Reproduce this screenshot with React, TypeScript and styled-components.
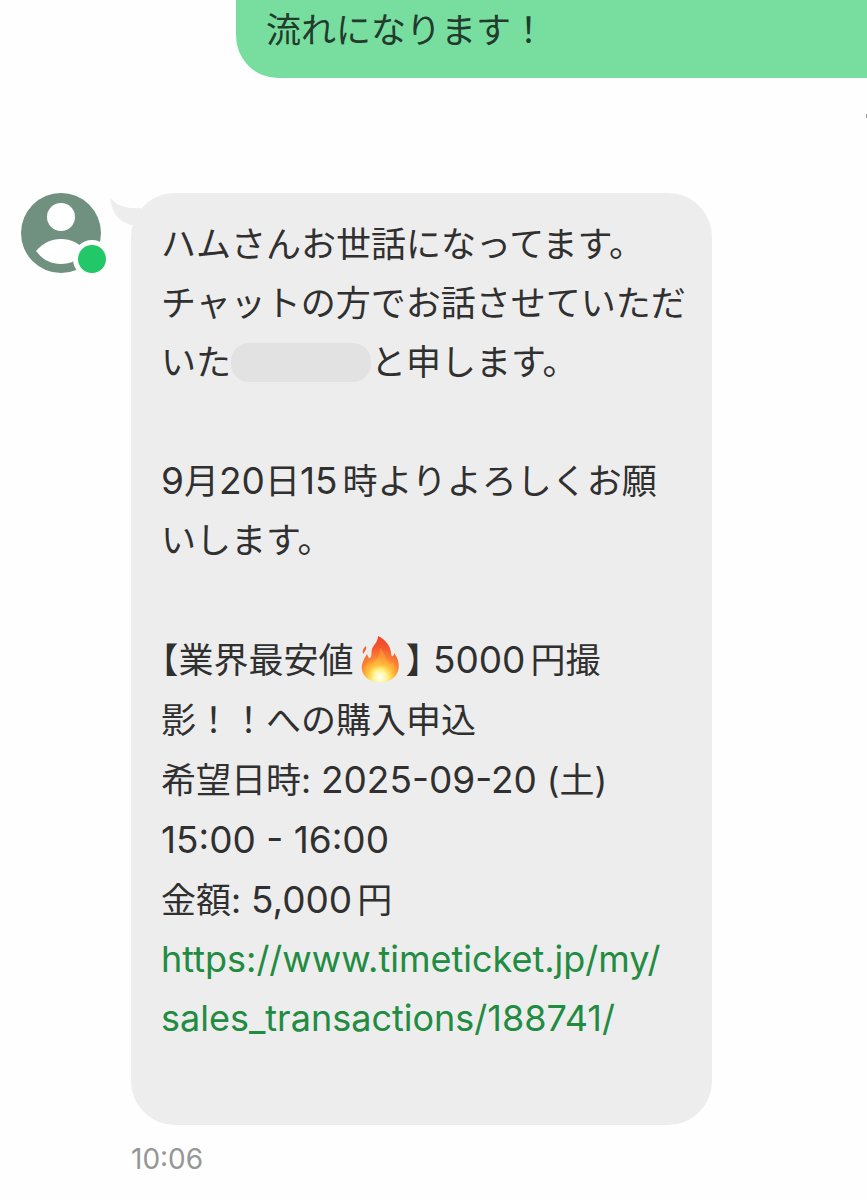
import React from "react";
import styled, { createGlobalStyle } from "styled-components";

const GlobalStyle = createGlobalStyle`
  *, *::before, *::after { box-sizing: border-box; }
  html { overflow-x: hidden; }
  body {
    margin: 0;
    background: #fefefe;
    color: #303030;
    font-family: Inter, "Noto Sans CJK JP", sans-serif;
    font-size: 35px;
    line-height: 59px;
  }
`;

const Chat = styled.main`
  display: flex;
  flex-direction: column;
`;

const SentMessage = styled.section`
  margin-left: 236px;
  padding: 1px 30px 18px;
  border-bottom-left-radius: 42px;
  background: #78dea0;
  color: #233b2c;
`;

const SentMeta = styled.div`
  display: flex;
  justify-content: flex-end;
  align-items: center;
  height: 76px;
`;

const MetaMark = styled.span`
  width: 1px;
  height: 4px;
  background: #999;
`;

const ReceivedMessage = styled.section`
  display: flex;
  align-items: flex-start;
  gap: 30px;
  margin-top: 39px;
  padding: 0 155px 0 21px;
`;

const Avatar = styled.div`
  position: relative;
  flex: none;
  width: 80px;
  height: 80px;

  svg { display: block; }
`;

const OnlineBadge = styled.span`
  position: absolute;
  right: -10px;
  bottom: -5px;
  width: 38px;
  height: 38px;
  border: 5px solid #fefefe;
  border-radius: 50%;
  background: #22c767;
`;

const Column = styled.div`
  flex: 1;
  min-width: 0;
`;

const Bubble = styled.div`
  position: relative;
  padding: 22px 0 77px 30px;
  border-radius: 44px;
  background: #ededed;
  white-space: nowrap;
`;

const Tail = styled.svg`
  position: absolute;
  top: 4px;
  left: -21px;
`;

const Paragraph = styled.p<{ $loose?: boolean }>`
  margin: 0;
  line-height: ${(p) => (p.$loose ? 60 : 59)}px;

  & + & { margin-top: 60px; }
`;

const Num = styled.span<{ $spaced?: boolean }>`
  margin-right: ${(p) => (p.$spaced ? 5 : 0)}px;
  font-size: 37px;
  line-height: 1;
`;

const Redacted = styled.span`
  display: inline-block;
  width: 140px;
  height: 39px;
  border-radius: 18px;
  background: #e2e2e2;
  vertical-align: -7px;
`;

const Bracket = styled.span`
  font-feature-settings: "halt";
`;

const Fire = styled.svg`
  margin: 0 6px;
  vertical-align: -10px;
`;

const MessageLink = styled.a`
  display: block;
  color: #218c41;
  font-size: 36px;
  text-decoration: none;
`;

const Time = styled.time`
  display: block;
  padding-top: 16px;
  color: #969696;
  font-size: 28px;
  line-height: 36px;
`;

const FireIcon = () => (
  <Fire width="40" height="48" viewBox="0 0 40 48" role="img" aria-label="火">
    <defs>
      <radialGradient id="flame" gradientUnits="userSpaceOnUse" cx="20" cy="42" r="40">
        <stop offset="0" stopColor="#fffde0" />
        <stop offset="0.14" stopColor="#fff176" />
        <stop offset="0.32" stopColor="#ffc23c" />
        <stop offset="0.5" stopColor="#fa8234" />
        <stop offset="0.75" stopColor="#f4562d" />
        <stop offset="1" stopColor="#ef4429" />
      </radialGradient>
      <radialGradient id="core" gradientUnits="userSpaceOnUse" cx="20" cy="42" r="14">
        <stop offset="0" stopColor="#ffffff" />
        <stop offset="0.45" stopColor="#fff79a" />
        <stop offset="1" stopColor="#ffd640" stopOpacity="0" />
      </radialGradient>
    </defs>
    <path
      d="M18 1C26 5 30 11 31 17C31 20 32 22 33 21C34 20 34 19 34 18C38 23 40 30 38 36C36 43 29 47 20 47C10 47 3 42 2 35C1 29 4 24 7 19C8 21 8 23 10 23C12 22 11 18 12 14C14 9 18 7 18 1Z"
      fill="url(#flame)"
    />
    <path d="M6 11C7 14 5 16 3 19C2 16 3 13 6 11Z" fill="#f0633a" />
    <path
      d="M20 13C25 18 26 25 29 29C31 30 32 28 33 26C36 34 32 43 20 45C9 45 4 38 7 29C8 31 10 33 12 30C15 26 20 22 20 13Z"
      fill="#ffb43a"
      opacity="0.4"
    />
    <ellipse cx="20" cy="39" rx="14" ry="8" fill="url(#core)" />
  </Fire>
);

export default function App() {
  return (
    <>
      <GlobalStyle />
      <Chat>
        <SentMessage>
          <Paragraph>流れになります！</Paragraph>
        </SentMessage>
        <SentMeta>
          <MetaMark />
        </SentMeta>
        <ReceivedMessage>
          <Avatar>
            <svg width="80" height="80" viewBox="0 0 80 80" aria-hidden="true">
              <circle cx="40" cy="40" r="40" fill="#70917f" />
              <circle cx="40" cy="24" r="14" fill="#fff" />
              <path d="M15 58C22 50 30 46 40 46C50 46 58 50 65 58C59 66 51 71 40 71C29 71 21 66 15 58Z" fill="#fff" />
            </svg>
            <OnlineBadge />
          </Avatar>
          <Column>
            <Bubble>
              <Tail width="42" height="32" viewBox="0 0 42 32" aria-hidden="true">
                <path d="M0 0C5 8 15 12 30 11L42 18L22 28C10 25 2 18 0 0Z" fill="#ededed" />
              </Tail>
              <Paragraph>
                ハムさんお世話になってます。
                <br />
                チャットの方でお話させていただ
                <br />
                いた
                <Redacted />
                と申します。
              </Paragraph>
              <Paragraph>
                <Num>9</Num>月<Num>20</Num>日<Num $spaced>15</Num>時よりよろしくお願
                <br />
                いします。
              </Paragraph>
              <Paragraph $loose>
                <Bracket>【</Bracket>
                業界最安値
                <FireIcon />
                <Bracket>】</Bracket> <Num $spaced>5000</Num>円撮
                <br />
                影！！への購入申込
                <br />
                希望日時: <Num>2025-09-20</Num> (土)
                <br />
                <Num>15:00 - 16:00</Num>
                <br />
                金額: <Num $spaced>5,000</Num>円
              </Paragraph>
              <MessageLink href="https://www.timeticket.jp/my/sales_transactions/188741/">
                https://www.timeticket.jp/my/
                <br />
                sales_transactions/188741/
              </MessageLink>
            </Bubble>
            <Time dateTime="10:06">10:06</Time>
          </Column>
        </ReceivedMessage>
      </Chat>
    </>
  );
}
